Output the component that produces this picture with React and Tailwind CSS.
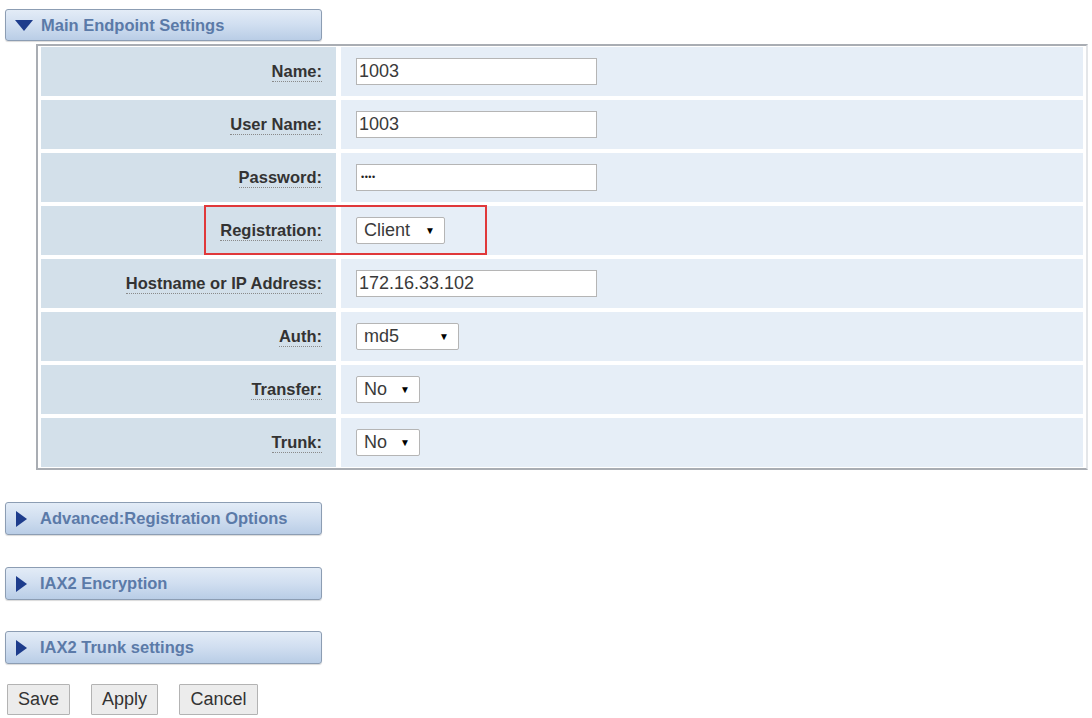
import React from "react";

const rows = [
  { label: "Name:", kind: "text", value: "1003" },
  { label: "User Name:", kind: "text", value: "1003" },
  { label: "Password:", kind: "password", value: "••••" },
  { label: "Registration:", kind: "select", value: "Client", w: "w-[89px]", marked: true },
  { label: "Hostname or IP Address:", kind: "text", value: "172.16.33.102" },
  { label: "Auth:", kind: "select", value: "md5", w: "w-[103px]" },
  { label: "Transfer:", kind: "select", value: "No", w: "w-[64px]" },
  { label: "Trunk:", kind: "select", value: "No", w: "w-[64px]" },
];

function SectionHeader({ title, open }) {
  return (
    <div className={`w-[317px] ${open ? "h-[32px]" : "h-[33px]"} flex items-center rounded-[3px] border border-[#8c9db3] bg-gradient-to-b from-[#e3ecf7] via-[#d0def0] to-[#b9cde6] shadow-[0_1px_1px_rgba(0,0,0,0.15)]`}>
      {open ? (
        <svg className="ml-[9px] mr-[8px]" width="18" height="11" viewBox="0 0 18 11">
          <polygon points="0,0 18,0 9,11" fill="#1d3c8c" />
        </svg>
      ) : (
        <svg className="ml-[10px] mr-[13px]" width="11" height="16" viewBox="0 0 11 16">
          <polygon points="0,0 11,8 0,16" fill="#1d3c8c" />
        </svg>
      )}
      <span className="text-[16.5px] font-bold text-[#5b7aa8]">{title}</span>
    </div>
  );
}

function Field({ row }) {
  if (row.kind === "select") {
    return (
      <div className={`${row.w} h-[27px] flex items-center justify-between pl-[7px] pr-[9px] bg-white border border-[#b5b5b5] rounded-[2px] text-[18px] text-[#3a3a3a]`}>
        <span>{row.value}</span>
        <span className="text-[10px] text-black">▼</span>
      </div>
    );
  }
  return (
    <div className="w-[241px] h-[27px] flex items-center px-[2px] bg-white border border-[#b5b5b5] text-[18px] text-[#3a3a3a]">
      {row.kind === "password" ? (
        <span className="pl-[2px] text-[9px] tracking-[0.5px] text-[#222]">{row.value}</span>
      ) : (
        row.value
      )}
    </div>
  );
}

function EndpointTable() {
  return (
    <div className="ml-[31px] mt-[3px] w-[1052px] border-2 border-[#a9adb3] border-r-[#e4e6e9] p-[3px] pt-[1px] pb-[1px] flex flex-col gap-[4px]">
      {rows.map((row) => (
        <div key={row.label} className="relative flex gap-[5px] h-[49px]">
          <div className="w-[295px] bg-[#d3e0ea] flex items-center justify-end pr-[14px]">
            <span className="text-[16.5px] font-bold text-[#333] border-b border-dotted border-[#8a8a8a] leading-[18px] pb-[1px]">
              {row.label}
            </span>
          </div>
          <div className="flex-1 bg-[#e6eef7] flex items-center pl-[15px]">
            <Field row={row} />
          </div>
          {row.marked && (
            <div className="absolute left-[163px] top-[-1px] w-[283px] h-[50px] border-2 border-[#e0383a] pointer-events-none" />
          )}
        </div>
      ))}
    </div>
  );
}

function PlainButton({ children, w }) {
  return (
    <button
      type="button"
      className={`${w} h-[31px] bg-[#ececec] border border-[#b3b3b3] text-[18px] text-[#333] rounded-[1px]`}
    >
      {children}
    </button>
  );
}

export default function App() {
  return (
    <div className="w-[1092px] h-[718px] bg-white overflow-hidden pt-[9px] pl-[5px] font-['Liberation_Sans',Arial,sans-serif]">
      <SectionHeader title="Main Endpoint Settings" open />
      <EndpointTable />
      <div className="mt-[32px]">
        <SectionHeader title="Advanced:Registration Options" />
      </div>
      <div className="mt-[32px]">
        <SectionHeader title="IAX2 Encryption" />
      </div>
      <div className="mt-[31px]">
        <SectionHeader title="IAX2 Trunk settings" />
      </div>
      <div className="mt-[20px] ml-[2px] flex gap-[21px]">
        <PlainButton w="w-[63px]">Save</PlainButton>
        <PlainButton w="w-[67px]">Apply</PlainButton>
        <PlainButton w="w-[79px]">Cancel</PlainButton>
      </div>
    </div>
  );
}
